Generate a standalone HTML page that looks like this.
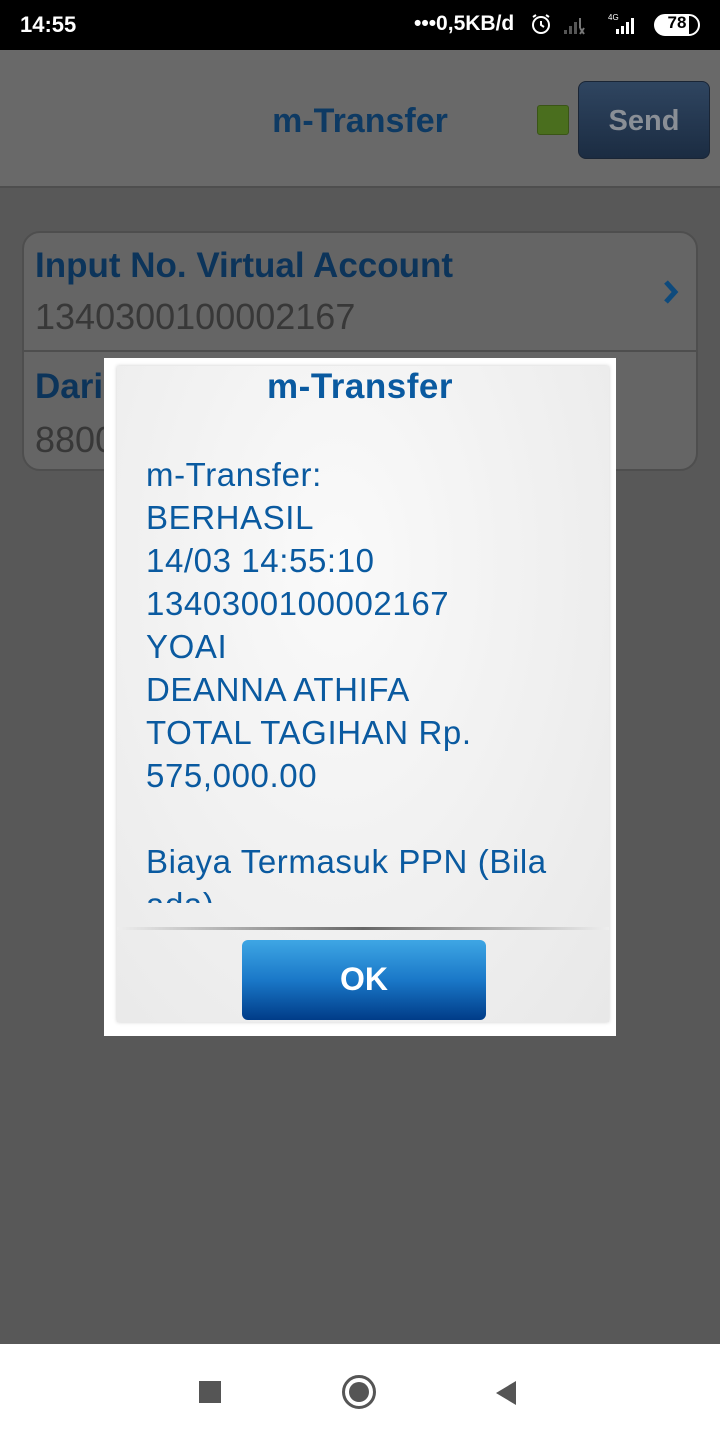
<!DOCTYPE html>
<html><head><meta charset="utf-8"><style>
*{margin:0;padding:0;box-sizing:border-box}
body{width:720px;height:1440px;position:relative;background:#585858;font-family:"Liberation Sans",sans-serif;overflow:hidden}
.a{position:absolute}
</style></head><body>
<div class="a" style="left:0;top:0;width:720px;height:50px;background:#000"></div>
<div class="a" style="left:20px;top:12px;color:#fff;font-size:22px;font-weight:bold">14:55</div>
<div class="a" style="left:414px;top:12px;color:#fff;font-size:21px;font-weight:bold">•••0,5KB/d</div>
<svg class="a" style="left:530px;top:13px" width="22" height="22"><circle cx="11" cy="12" r="8" fill="none" stroke="#fff" stroke-width="2"/><path d="M11 8v4l3 2M3 4l3-2M19 4l-3-2" stroke="#fff" stroke-width="2" fill="none"/></svg>
<svg class="a" style="left:562px;top:14px" width="28" height="22"><path d="M2 20h3v-4H2zM7 20h3v-8H7zM12 20h3V8h-3z" fill="#555"/><path d="M18 4v10M22 14l-4 6M18 14l4 6" stroke="#777" stroke-width="2"/></svg>
<svg class="a" style="left:604px;top:12px" width="40" height="24"><text x="4" y="8" font-size="8" fill="#fff" font-family="Liberation Sans">4G</text><path d="M12 22h3v-5h-3zM17 22h3v-8h-3zM22 22h3V10h-3zM27 22h3V6h-3z" fill="#fff"/></svg>
<div class="a" style="left:654px;top:14px;width:46px;height:22px;border:2px solid #fff;border-radius:11px;background:linear-gradient(90deg,#fff 78%,#000 78%)"></div>
<div class="a" style="left:654px;top:13px;width:46px;text-align:center;font-size:17px;font-weight:bold;color:#000">78</div>

<div class="a" style="left:0;top:50px;width:720px;height:138px;background:#696969;border-bottom:2px solid #4e4e4e"></div>
<div class="a" style="left:0;top:102px;width:720px;text-align:center;font-size:34px;font-weight:bold;color:#0e3a63">m-Transfer</div>
<div class="a" style="left:537px;top:105px;width:32px;height:30px;background:#4a6e1e;border-radius:3px;border:1px solid #3a5516"></div>
<div class="a" style="left:578px;top:81px;width:132px;height:78px;background:linear-gradient(#2f4560,#1b2c42);border-radius:8px;border:1px solid #1a2535;color:#8a8f96;font-size:29px;font-weight:bold;text-align:center;line-height:78px">Send</div>

<div class="a" style="left:22px;top:231px;width:676px;height:240px;background:#656565;border:2px solid #4e4e4e;border-radius:18px"></div>
<div class="a" style="left:24px;top:350px;width:672px;height:2px;background:#4e4e4e"></div>
<div class="a" style="left:35px;top:246px;font-size:35px;font-weight:bold;color:#0c345a">Input No. Virtual Account</div>
<div class="a" style="left:35px;top:296px;font-size:36px;color:#383838">1340300100002167</div>
<div class="a" style="left:35px;top:367px;font-size:35px;font-weight:bold;color:#0c345a">Dari</div>
<div class="a" style="left:35px;top:419px;font-size:36px;color:#383838">8800</div>
<svg class="a" style="left:660px;top:278px" width="24" height="28"><path d="M6 4l9 10-9 10" stroke="#0e4a7c" stroke-width="5" fill="none"/></svg>

<div class="a" style="left:104px;top:358px;width:512px;height:678px;background:#fff"></div>
<div class="a" style="left:117px;top:366px;width:492px;height:656px;background:radial-gradient(ellipse at 45% 30%,#fafafa,#e8e8e8);box-shadow:0 0 4px #ccc"></div>
<div class="a" style="left:104px;top:367px;width:512px;text-align:center;font-size:35px;font-weight:bold;color:#0a5aa0;letter-spacing:0.5px">m-Transfer</div>
<div class="a" style="left:146px;top:453px;width:460px;height:450px;overflow:hidden;font-size:33px;line-height:43px;color:#0a5aa0;letter-spacing:0.6px">m-Transfer:<br>BERHASIL<br>14/03 14:55:10<br>1340300100002167<br>YOAI<br>DEANNA ATHIFA<br>TOTAL TAGIHAN Rp.<br>575,000.00<br><br>Biaya Termasuk PPN (Bila<br>ada)</div>
<div class="a" style="left:117px;top:927px;width:492px;height:3px;background:linear-gradient(90deg,#eee,#666 50%,#eee)"></div>
<div class="a" style="left:242px;top:940px;width:244px;height:80px;border-radius:6px;background:linear-gradient(#3ea6e4,#1a78c8 50%,#003c88);color:#fff;font-size:32px;font-weight:bold;text-align:center;line-height:78px">OK</div>

<div class="a" style="left:0;top:1344px;width:720px;height:96px;background:#fff"></div>
<div class="a" style="left:199px;top:1381px;width:22px;height:22px;background:#555"></div>
<div class="a" style="left:342px;top:1375px;width:34px;height:34px;border:3px solid #555;border-radius:50%"></div>
<div class="a" style="left:349px;top:1382px;width:20px;height:20px;background:#555;border-radius:50%"></div>
<svg class="a" style="left:494px;top:1380px" width="24" height="26"><path d="M22 1v24L2 13z" fill="#555"/></svg>
</body></html>
